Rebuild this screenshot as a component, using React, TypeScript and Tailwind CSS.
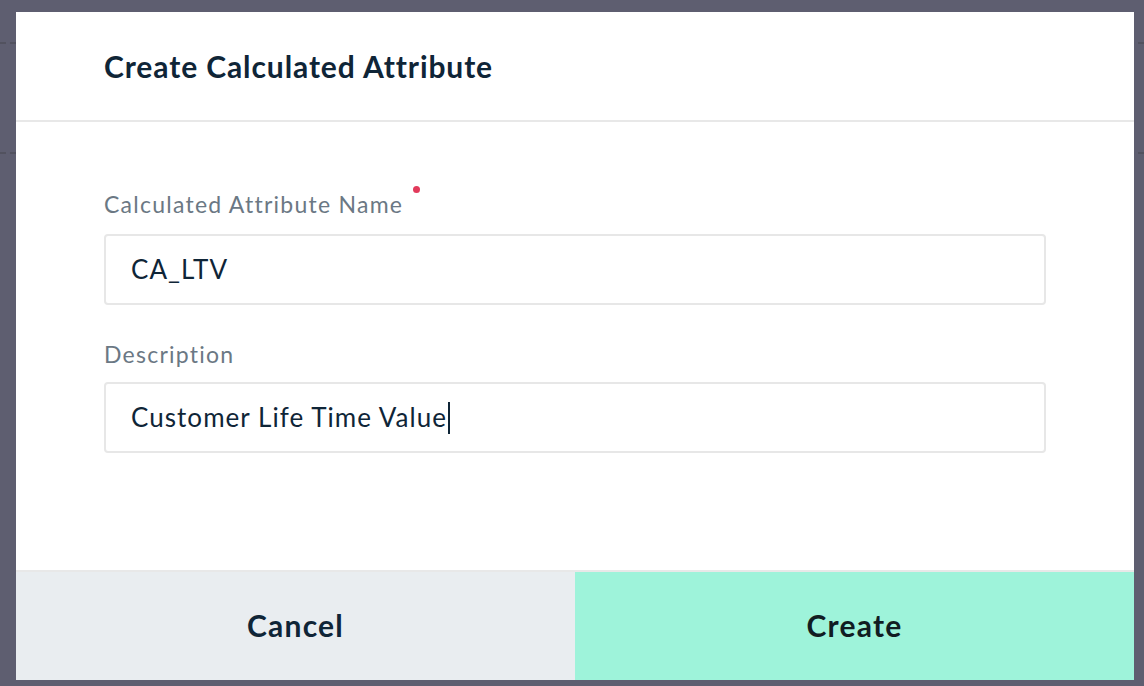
import React from "react"

const font = { fontFamily: "Lato, 'Open Sans', sans-serif" }

function Field({ label, value, required, caret, gap }: { label: string; value: string; required?: boolean; caret?: boolean; gap: string }) {
  return (
    <div className="flex flex-col">
      <div className="flex items-start text-[23px] leading-[30px] tracking-[1.25px] text-[#6b7884]">
        <span>{label}</span>
        {required && <span className="ml-[10px] mt-[-3px] h-[7px] w-[7px] rounded-full bg-[#e23a5b]" />}
      </div>
      <div className={`${gap} flex h-[71px] items-center rounded-[4px] border-2 border-[#e7e7e7] pl-[25px] text-[26px] tracking-[1.05px] text-[#0f2537]`}>
        <span>{value}</span>
        {caret && <span className="ml-[1px] h-[32px] w-[2px] bg-[#0f2537]" />}
      </div>
    </div>
  )
}

export default function App() {
  return (
    <div className="relative h-[686px] w-[1144px] overflow-hidden bg-[#5e5e70]" style={font}>
      {/* page underneath the overlay */}
      <div className="h-[44px] border-b-2 border-dashed border-[#52525f]" />
      <div className="h-[110px] border-b-2 border-dashed border-[#52525f]" />

      <div className="absolute left-[16px] top-[12px] flex h-[668px] w-[1118px] flex-col bg-white">
        <div className="flex h-[110px] items-center border-b-2 border-[#e8e8e8] px-[88px]">
          <h2 className="text-[30px] font-bold tracking-[0.9px] text-[#0f2537]">Create Calculated Attribute</h2>
        </div>

        <div className="flex flex-1 flex-col px-[88px] pt-[67px]">
          <Field label="Calculated Attribute Name" value="CA_LTV" required gap="mt-[15px]" />
          <div className="h-[34px]" />
          <Field label="Description" value="Customer Life Time Value" caret gap="mt-[13px]" />
        </div>

        <div className="grid h-[110px] grid-cols-2 border-t-2 border-[#e8e8e8]">
          <button className="bg-[#e9edf0] pb-[2px] text-[30px] font-bold tracking-[1.2px] text-[#0f2537]">Cancel</button>
          <button className="bg-[#9ef3da] pb-[2px] text-[30px] font-bold tracking-[1.2px] text-[#111c22]">Create</button>
        </div>
      </div>
    </div>
  )
}
